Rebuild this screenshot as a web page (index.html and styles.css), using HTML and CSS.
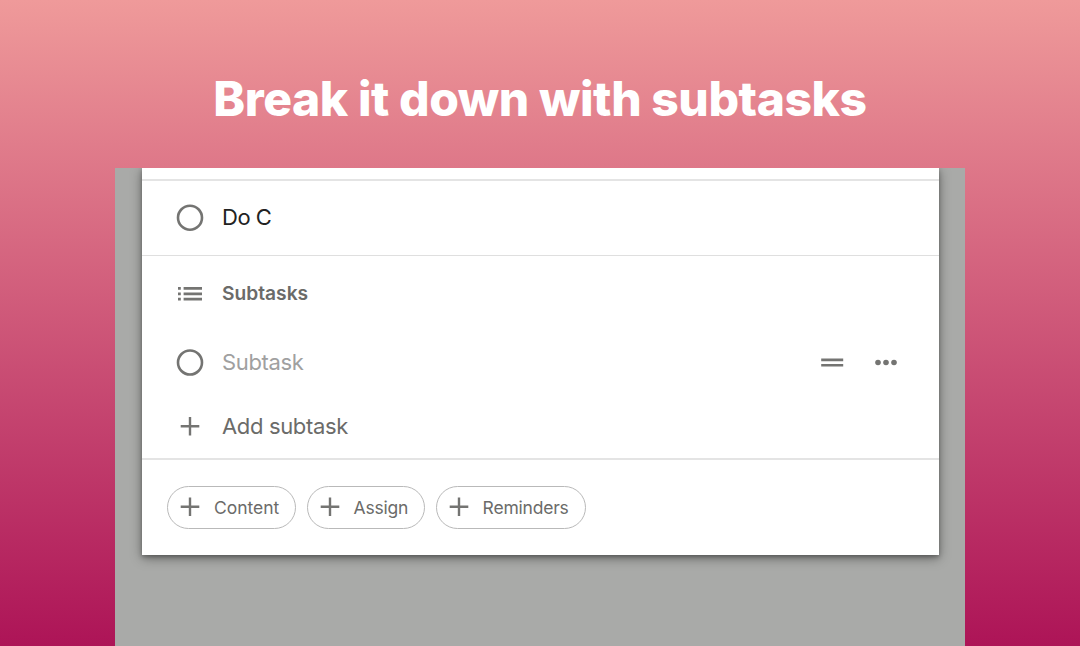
FILE: index.html
```
<!DOCTYPE html>
<html lang="en">
<head>
  <meta charset="utf-8">
  <title>Break it down with subtasks</title>
  <link rel="stylesheet" href="styles.css">
</head>
<body>
  <h1 class="title">Break it down with subtasks</h1>
  <div class="screen">
    <div class="card">
      <div class="card-top"></div>
      <div class="row task-row">
        <svg class="icon" viewBox="0 0 28 28"><circle cx="14" cy="13.7" r="12"/></svg>
        <span class="task-name">Do C</span>
      </div>
      <div class="subtasks">
        <div class="row subtasks-header">
          <svg class="icon list-icon" viewBox="0 0 28 28">
            <path d="M2 9.3h2.8M7.6 9.3H26M2 14.8h2.8M7.6 14.8H26M2 20.2h2.8M7.6 20.2H26"/>
          </svg>
          <h2 class="heading">Subtasks</h2>
        </div>
        <div class="row subtask-row">
          <svg class="icon" viewBox="0 0 28 28"><circle cx="14" cy="14.5" r="12"/></svg>
          <span class="subtask-name">Subtask</span>
          <svg class="icon drag-icon" viewBox="0 0 28 28"><path d="M3.2 11.9h22M3.2 17.3h22"/></svg>
          <svg class="icon more-icon" viewBox="0 0 28 28">
            <circle cx="6" cy="14.5" r="2.8"/>
            <circle cx="14" cy="14.5" r="2.8"/>
            <circle cx="22" cy="14.5" r="2.8"/>
          </svg>
        </div>
        <div class="row add-row">
          <svg class="icon plus-icon" viewBox="0 0 28 28"><path d="M4.7 14.2h18.6M14 4.9v18.6"/></svg>
          <span class="add-label">Add subtask</span>
        </div>
      </div>
      <div class="chips">
        <button class="chip">
          <svg class="icon plus-icon" viewBox="0 0 28 28"><path d="M4.7 13.7h18.6M14 4.4v18.6"/></svg>
          <span class="wide">Content</span>
        </button>
        <button class="chip">
          <svg class="icon plus-icon" viewBox="0 0 28 28"><path d="M4.7 13.7h18.6M14 4.4v18.6"/></svg>
          <span>Assign</span>
        </button>
        <button class="chip">
          <svg class="icon plus-icon" viewBox="0 0 28 28"><path d="M4.7 13.7h18.6M14 4.4v18.6"/></svg>
          <span>Reminders</span>
        </button>
      </div>
    </div>
  </div>
</body>
</html>
```
FILE: styles.css
```
* {
  box-sizing: border-box;
}

body {
  margin: 0;
  height: 646px;
  overflow: hidden;
  font-family: Inter, "Liberation Sans", sans-serif;
  color: #6b6b69;
  background: linear-gradient(#ef9a9a, #ad1457);
}

.title {
  margin: 0;
  height: 168px;
  padding-top: 70px;
  font-size: 48px;
  font-weight: 800;
  line-height: 58px;
  letter-spacing: -0.44px;
  text-align: center;
  color: #fff;
}

.screen {
  width: 850px;
  height: 478px;
  margin: 0 auto;
  padding: 0 26px 0 27px;
  overflow: hidden;
  background: #a9aaa8;
}

.card {
  height: 387px;
  background: #fff;
  box-shadow: 0 3px 11px rgba(0, 0, 0, 0.4), 0 2px 4px rgba(0, 0, 0, 0.25);
}

.card-top {
  height: 13px;
  border-bottom: 2px solid #e4e4e4;
}

.row {
  display: flex;
  align-items: center;
  padding: 0 39px 0 34px;
}

.icon {
  flex: none;
  width: 28px;
  height: 28px;
  fill: none;
  stroke: #747472;
  stroke-width: 2.6;
}

.row .icon:first-child {
  margin-right: 18px;
}

.list-icon {
  stroke-width: 2.7;
}

.plus-icon {
  stroke-width: 2.4;
}

.drag-icon {
  margin-left: auto;
  margin-right: 26px;
  stroke-width: 2.6;
}

.more-icon {
  fill: #747472;
  stroke: none;
}

.task-row {
  height: 75px;
  border-bottom: 1px solid #dfdfdf;
}

.task-name {
  margin-top: -2px;
  font-size: 22px;
  letter-spacing: -0.5px;
  color: #222;
}

.subtasks {
  height: 204px;
  border-bottom: 2px solid #e4e4e4;
}

.subtasks-header {
  height: 74px;
}

.heading {
  margin: 0;
  font-size: 19.2px;
  font-weight: 600;
}

.subtask-row {
  height: 64px;
}

.subtask-name {
  font-size: 22px;
  letter-spacing: -0.35px;
  color: #a0a0a0;
}

.add-row {
  height: 64px;
}

.add-label {
  font-size: 22px;
  letter-spacing: -0.35px;
}

.chips {
  display: flex;
  gap: 10.5px;
  padding: 26px 25.4px;
}

.chip {
  display: flex;
  align-items: center;
  height: 42.5px;
  padding: 0 16.2px 0 7.7px;
  font: 17.5px Inter, "Liberation Sans", sans-serif;
  letter-spacing: -0.2px;
  color: #6b6b69;
  background: #fff;
  border: 1.4px solid #b9b9b9;
  border-radius: 22px;
}

.chip .icon {
  margin-right: 10px;
}

.chip .wide {
  letter-spacing: -0.05px;
}
```
